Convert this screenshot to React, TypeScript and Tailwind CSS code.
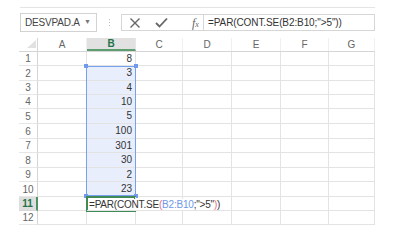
const font = "font-['Liberation_Sans',Arial,sans-serif]";

const cols = ['A', 'B', 'C', 'D', 'E', 'F', 'G'];
const colWidths = [49, 49, 47, 49, 49, 48, 46];
const rowHeights = [14, 15, 14, 14, 15, 15, 14, 15, 14, 15, 14, 14];
const values: Record<number, string> = {
  1: '8',
  2: '3',
  3: '4',
  4: '10',
  5: '5',
  6: '100',
  7: '301',
  8: '30',
  9: '2',
  10: '23',
};

function Handle({ className }: { className: string }) {
  return <div className={`absolute w-[4px] h-[4px] bg-[#6f9bea] ${className}`} />;
}

export default function App() {
  return (
    <div className={`w-[404px] h-[244px] bg-white text-[#333] ${font}`}>
      <div className="pt-[7px] pl-[20px]">
        <div className="w-[355px] border-t border-[#e4e4e4]" />
      </div>

      {/* name box + formula bar */}
      <div className="flex items-center mt-[5px] pl-[20px] h-[19px]">
        <div className="w-[77px] h-[19px] border border-[#d2d2d2] flex items-center justify-between pl-[4px] pr-[5px]">
          <span className="text-[10px] text-[#444] tracking-[-0.2px]">DESVPAD.A</span>
          <span className="text-[7px] text-[#777]">▼</span>
        </div>
        <div className="w-[24px] flex flex-col items-center gap-[2px]">
          <div className="w-[1px] h-[1px] bg-[#bbb]" />
          <div className="w-[1px] h-[1px] bg-[#bbb]" />
          <div className="w-[1px] h-[1px] bg-[#bbb]" />
        </div>
        <div className="w-[254px] h-[17px] border border-[#d6d6d6] flex items-center">
          <div className="w-[82px] flex items-center h-full border-r border-[#d6d6d6]">
            <svg width="12" height="12" viewBox="0 0 12 12" className="ml-[7px]">
              <path d="M1.5 1.5 L10.5 10.5 M10.5 1.5 L1.5 10.5" stroke="#666" strokeWidth="1.4" />
            </svg>
            <svg width="13" height="11" viewBox="0 0 13 11" className="ml-[14px]">
              <path d="M1 6 L4.5 9.5 L12 1.5" stroke="#666" strokeWidth="1.8" fill="none" />
            </svg>
            <span className="ml-[24px] text-[12px] italic text-[#666] font-['Liberation_Serif',serif]">
              f<span className="text-[8px]">x</span>
            </span>
          </div>
          <span className="pl-[4px] text-[10px] text-[#333] whitespace-nowrap tracking-[-0.1px]">
            =PAR(CONT.SE(B2:B10;"&gt;5"))
          </span>
        </div>
      </div>

      {/* grid */}
      <div className="mt-[6px] ml-[19px] relative w-[356px]">
        {/* header row */}
        <div className="flex h-[14px] border-b border-[#d5d5d5]">
          <div className="w-[19px] relative border-r border-[#d5d5d5]">
            <svg width="9" height="8" viewBox="0 0 9 8" className="absolute left-[8px] top-[2px]">
              <path d="M9 0 L9 8 L0 8 Z" fill="#e1e1e1" />
            </svg>
          </div>
          {cols.map((c, i) => (
            <div
              key={c}
              style={{ width: colWidths[i] }}
              className={
                c === 'B'
                  ? 'flex items-center justify-center text-[10px] text-[#217346] font-bold bg-[#e1e1e1] border-b-2 border-[#5d9d6f] border-r border-r-[#e6e6e6]'
                  : 'flex items-center justify-center text-[10px] text-[#666] border-r border-[#f0f0f0]'
              }
            >
              {c}
            </div>
          ))}
        </div>

        {rowHeights.map((h, r) => {
          const row = r + 1;
          const active = row === 11;
          return (
            <div key={row} className="flex" style={{ height: h }}>
              <div
                className={
                  active
                    ? 'w-[19px] flex items-center justify-center text-[10px] font-bold text-[#217346] bg-[#dedede] border-b border-[#d8d8d8] border-r-2 border-r-[#4e9263]'
                    : 'w-[19px] flex items-center justify-center text-[10px] text-[#666] border-b border-[#e6e6e6] border-r border-r-[#d5d5d5]'
                }
              >
                {row}
              </div>
              {cols.map((c, i) => {
                const inSel = c === 'B' && row >= 2 && row <= 10;
                return (
                  <div
                    key={c}
                    style={{ width: colWidths[i] }}
                    className={`relative border-r border-b border-[#e3e3e3] text-[10px] leading-none flex items-center ${
                      inSel ? 'bg-[#e8eefb]' : ''
                    } ${c === 'B' && active ? 'z-10' : ''}`}
                  >
                    {c === 'B' && values[row] && (
                      <span className="ml-auto pr-[3px] text-[#333]">{values[row]}</span>
                    )}
                    {c === 'B' && active && (
                      <span className="absolute left-[2px] top-[2px] bg-white pr-[1px] whitespace-nowrap text-[#333] leading-[11px] tracking-[-0.2px]">
                        =PAR(CONT.SE<span className="text-[#ea6b7d]">(</span>
                        <span className="text-[#6e97e6]">B2:B10</span>;"&gt;5"
                        <span className="text-[#ea6b7d]">)</span>)
                      </span>
                    )}
                  </div>
                );
              })}
            </div>
          );
        })}

        {/* selection B2:B10 */}
        <div className="absolute left-[67px] top-[28px] w-[50px] h-[130px] border border-[#78a1ec] pointer-events-none">
          <Handle className="-left-[3px] -top-[3px]" />
          <Handle className="-right-[3px] -top-[3px]" />
          <Handle className="-left-[3px] -bottom-[3px]" />
          <Handle className="-right-[3px] -bottom-[3px]" />
        </div>
        {/* active cell B11 */}
        <div className="absolute left-[67px] top-[158px] w-[50px] h-[16px] border-2 border-[#3f8a57] pointer-events-none z-[5]" />
      </div>
    </div>
  );
}
